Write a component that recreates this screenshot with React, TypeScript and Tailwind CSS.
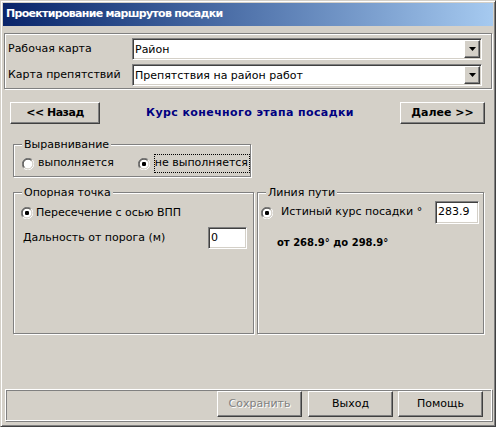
import React from "react";

const sunken =
  "bg-white border border-t-[#808080] border-l-[#808080] border-b-white border-r-white shadow-[inset_1px_1px_0_#404040,inset_-1px_-1px_0_#d4d0c8]";
const raised =
  "bg-[#d4d0c8] border border-t-white border-l-white border-b-[#404040] border-r-[#404040] shadow-[inset_-1px_-1px_0_#808080,inset_1px_1px_0_#d4d0c8]";
const etched =
  "border border-[#808080] shadow-[inset_1px_1px_0_#fff,1px_1px_0_#fff]";
const bump =
  "border border-white shadow-[inset_1px_1px_0_#808080,1px_1px_0_#808080]";

function Radio({ checked }: { checked?: boolean }) {
  return (
    <svg width="12" height="12" viewBox="0 0 12 12" className="shrink-0">
      <circle cx="6" cy="6" r="4.5" fill="#fff" />
      <path d="M10.24 1.76 A6 6 0 0 0 1.76 10.24" fill="none" stroke="#808080" strokeWidth="1" />
      <path d="M1.76 10.24 A6 6 0 0 0 10.24 1.76" fill="none" stroke="#ffffff" strokeWidth="1" />
      <path d="M9.5 2.5 A4.95 4.95 0 0 0 2.5 9.5" fill="none" stroke="#404040" strokeWidth="1" />
      <path d="M2.5 9.5 A4.95 4.95 0 0 0 9.5 2.5" fill="none" stroke="#d4d0c8" strokeWidth="1" />
      {checked && <rect x="4" y="4" width="4" height="4" rx="1.2" fill="#000" />}
    </svg>
  );
}

function Combo({ text }: { text: string }) {
  return (
    <div className={`${sunken} flex-1 h-[22px] p-[1px] flex items-stretch`}>
      <div className="flex-1 flex items-center pl-[1px] leading-none">{text}</div>
      <div className={`${raised} w-[16px] flex items-center justify-center`}>
        <svg width="7" height="4" viewBox="0 0 7 4">
          <path d="M0 0 H7 L3.5 4 Z" fill="#000" />
        </svg>
      </div>
    </div>
  );
}

function Legend({ children }: { children: React.ReactNode }) {
  return (
    <span className="absolute top-[-7px] left-[8px] px-[2px] bg-[#d4d0c8] leading-[13px]">
      {children}
    </span>
  );
}

export default function App() {
  return (
    <div className="w-[496px] h-[427px] bg-[#d4d0c8] border border-t-[#d4d0c8] border-l-[#d4d0c8] border-r-[#404040] border-b-[#404040] shadow-[inset_1px_1px_0_#fff,inset_-1px_-1px_0_#808080] p-[2px] flex flex-col font-['DejaVu_Sans',sans-serif] text-[11px] text-black overflow-hidden">
      {/* Title bar */}
      <div className="h-[23px] shrink-0 flex items-center pl-[3px] text-white font-bold bg-linear-to-r from-[#0a246a] to-[#a6caf0] tracking-[-0.7px]">
        Проектирование маршрутов посадки
      </div>

      {/* Maps group */}
      <div className={`${etched} mt-[7px] mx-[1px] h-[56px] shrink-0 pt-[4px] pl-[3px] pr-[9px] flex flex-col gap-[4px]`}>
        <div className="flex items-center">
          <div className="w-[124px]">Рабочая карта</div>
          <Combo text="Район" />
        </div>
        <div className="flex items-center">
          <div className="w-[124px]">Карта препятствий</div>
          <Combo text="Препятствия на район работ" />
        </div>
      </div>

      {/* Navigation row */}
      <div className="mt-[13px] ml-[7px] mr-[8px] h-[22px] shrink-0 flex items-center">
        <div className={`${raised} w-[90px] h-[22px] flex items-center justify-center font-bold tracking-[-0.5px]`}>
          &lt;&lt; Назад
        </div>
        <div className="flex-1 text-center font-bold text-[#000080] tracking-[0.4px]">
          Курс конечного этапа посадки
        </div>
        <div className={`${raised} w-[85px] h-[22px] flex items-center justify-center font-bold`}>
          Далее &gt;&gt;
        </div>
      </div>

      {/* Alignment group */}
      <div className={`${etched} relative mt-[20px] ml-[10px] w-[238px] h-[33px] shrink-0 pt-[9px] pl-[8px]`}>
        <Legend>Выравнивание</Legend>
        <div className="h-[19px] flex items-center">
          <div className="w-[116px] flex items-center gap-[4px]">
            <Radio />
            <span>выполняется</span>
          </div>
          <div className="flex items-center gap-[4px]">
            <Radio checked />
            <span className="h-[19px] flex items-center border border-dotted border-black pr-[1px] whitespace-nowrap">
              не выполняется
            </span>
          </div>
        </div>
      </div>

      {/* Two groups */}
      <div className="mt-[15px] ml-[10px] h-[142px] shrink-0 flex gap-[3px]">
        <div className={`${etched} relative w-[241px] h-full pt-[12px]`}>
          <Legend>Опорная точка</Legend>
          <div className="h-[16px] pl-[7px] flex items-center gap-[3px]">
            <Radio checked />
            <span>Пересечение с осью ВПП</span>
          </div>
          <div className="mt-[6px] pl-[9px] flex items-center h-[22px]">
            <div className="w-[185px]">Дальность от порога (м)</div>
            <div className={`${sunken} w-[39px] h-[22px] flex items-center pl-[2px]`}>0</div>
          </div>
        </div>
        <div className={`${etched} relative w-[227px] h-full pt-[8px]`}>
          <Legend>Линия пути</Legend>
          <div className="h-[23px] pl-[3px] pr-[4px] flex items-center">
            <Radio checked />
            <span className="ml-[8px] flex-1">Истиный курс посадки °</span>
            <div className={`${sunken} w-[44px] h-[23px] flex items-center pl-[2px]`}>283.9</div>
          </div>
          <div className="mt-[12px] pl-[19px] font-bold leading-[13px] text-[10px]">
            от 268.9° до 298.9°
          </div>
        </div>
      </div>

      {/* Bottom buttons */}
      <div className={`${bump} mt-[55px] ml-[2px] mr-[1px] h-[32px] shrink-0 pt-[1px] pr-[8px] flex justify-end items-start`}>
        <div className={`${raised} w-[85px] h-[26px] flex items-center justify-center text-[#808080] [text-shadow:1px_1px_0_#fff]`}>
          Сохранить
        </div>
        <div className={`${raised} ml-[6px] w-[85px] h-[26px] flex items-center justify-center`}>
          Выход
        </div>
        <div className={`${raised} ml-[5px] w-[85px] h-[26px] flex items-center justify-center`}>
          Помощь
        </div>
      </div>
    </div>
  );
}
